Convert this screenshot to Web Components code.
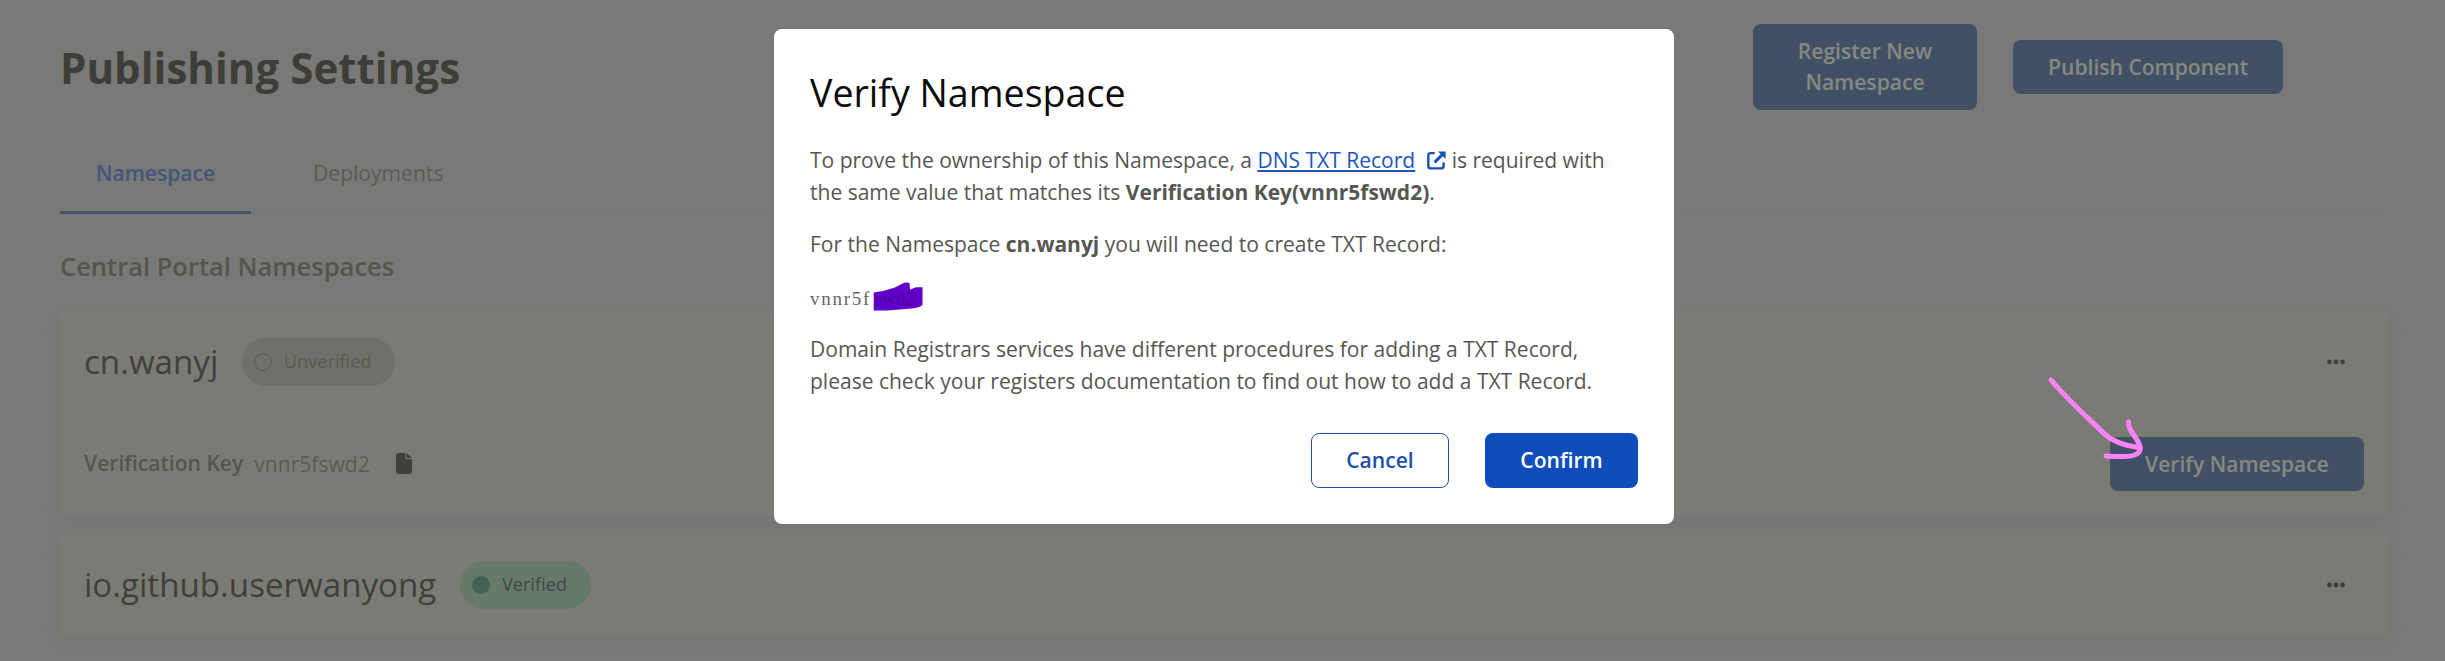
<!DOCTYPE html>
<html lang="en">
<head>
<meta charset="utf-8">
<title>Publishing Settings</title>
<style>
  html, body { margin: 0; height: 661px; overflow: hidden; background: #797977; }
  body { font-family: "Open Sans", "Noto Sans", sans-serif; font-size: 21.08px; line-height: 32px; color: #5b5b53; }
</style>
</head>
<body>
<publishing-page></publishing-page>

<script>
const define = (name, html) => customElements.define(name, class extends HTMLElement {
  constructor() {
    super();
    const t = document.createElement('template');
    t.innerHTML = html;
    this.attachShadow({ mode: 'open' }).append(t.content.cloneNode(true));
  }
});

define('ui-button', `
<style>
  :host { display: flex; align-items: center; justify-content: center; box-sizing: border-box; text-align: center;
    height: 54px; padding-bottom: 2px; border-radius: 8px; background: #425066; color: #858a80; font-weight: 600; line-height: 31px; white-space: nowrap; }
  :host([variant="primary"]) { height: 55px; background: #0f4dbd; color: #fff; }
  :host([variant="outline"]) { height: 55px; background: #fff; color: #1c50ac; border: 1px solid #1c50ac; }
</style>
<span><slot></slot></span>`);

define('status-pill', `
<style>
  :host { display: flex; align-items: center; box-sizing: border-box; height: 48px; border-radius: 24px;
    padding: 0 23.5px 0 12px; gap: 12px; background: #70706a; color: #5a5a51; font-size: 18.2px; line-height: 24px; }
  i { width: 18px; height: 18px; box-sizing: border-box; border-radius: 50%; border: 1.3px solid #5a5a51; }
  span { position: relative; top: -1px; }
  :host([verified]) { background: #66796b; color: #3e4a40; }
  :host([verified]) i { background: #426351; border: 0; }
</style>
<i></i><span><slot></slot></span>`);

define('more-icon', `
<style>:host { display: block; width: 20px; height: 8px; } svg { display: block; }</style>
<svg width="20" height="8" viewBox="0 0 20 8" fill="#3f3f39"><circle cx="3.5" cy="4" r="2.4"/><circle cx="10" cy="4" r="2.4"/><circle cx="16.5" cy="4" r="2.4"/></svg>`);

define('external-icon', `
<style>:host { display: inline-block; width: 19px; height: 19px; vertical-align: -2px; margin: 0 5.5px 0 12px; } svg { display: block; }</style>
<svg width="19" height="19" viewBox="0 0 19 19" fill="none" stroke="#134fb5" stroke-width="2.4">
  <path d="M7.6 2.1H3.6Q1.3 2.1 1.3 4.4V15.1Q1.3 17.4 3.6 17.4H14.3Q16.6 17.4 16.6 15.1V11.6"/>
  <path d="M7.6 11.4L15 4" stroke-width="3"/><path d="M11 .4H18.6V8Z" fill="#134fb5" stroke="none"/>
</svg>`);

define('file-icon', `
<style>:host { display: block; width: 16px; height: 21px; } svg { display: block; }</style>
<svg width="16" height="21" viewBox="0 0 16 21" fill="#40403a"><path d="M2.5 0H9.4V6.2H16V18.6Q16 21 13.5 21H2.5Q0 21 0 18.6V2.4Q0 0 2.5 0Z"/><path d="M10.6 0L16 5.1H10.6Z"/></svg>`);

define('page-header', `
<style>
  :host { display: flex; align-items: center; height: 86px; padding: 24px 162px 0 60px; }
  h1 { margin: 2px 0 0; flex: 1; font-size: 42.1px; line-height: 58px; font-weight: 700; color: #3e3e39; }
  .register { width: 224px; height: 86px; margin-right: 36px; }
  .publish { width: 270px; }
</style>
<h1>Publishing Settings</h1>
<ui-button class="register">Register New<br>Namespace</ui-button>
<ui-button class="publish">Publish Component</ui-button>`);

define('page-tabs', `
<style>
  :host { display: flex; gap: 26px; margin: 21px 57px 0 60px; height: 83px; box-shadow: inset 0 -1px #757573; }
  div { box-sizing: border-box; padding: 26px 36px 0; border-bottom: 3px solid transparent; color: #5b5b53; }
  .on { width: 191px; font-weight: 600; color: #42557c; border-color: #43536c; }
</style>
<div class="on">Namespace</div><div>Deployments</div>`);

define('namespace-card', `
<style>
  :host { display: flex; flex-direction: column; justify-content: space-between; box-sizing: border-box; height: 204px;
    padding: 27px 24px 24px; border-radius: 6px; background: #7b7b75; box-shadow: 0 6px 18px rgba(90,90,90,.14); }
  :host([compact]) { height: 101px; padding-top: 26px; }
  .top { display: flex; align-items: center; height: 48px; gap: 23.5px; padding-right: 18px; }
  .name { font-size: 33.15px; line-height: 44px; color: #40403a; margin-top: -1px; }
  more-icon { margin-left: auto; }
</style>
<div class="top"><div class="name"><slot name="name"></slot></div><slot name="status"></slot><more-icon></more-icon></div>
<slot></slot>`);

define('key-row', `
<style>
  :host { display: flex; align-items: center; height: 54px; }
  b { font-weight: 600; margin-right: 11px; color: #55554e; margin-top: -2px; }
  file-icon { margin: -1px auto 0 26px; }
  ui-button { width: 254px; }
</style>
<b>Verification Key</b><span><slot></slot></span><file-icon></file-icon><ui-button>Verify Namespace</ui-button>`);

define('redacted-code', `
<style>
  :host { display: block; position: relative; height: 33px; font: 19px/38px "Liberation Serif", serif; letter-spacing: 1.72px; color: #666660; }
  svg { position: absolute; left: 63px; top: 2px; }
  b { font-weight: 400; letter-spacing: 0; position: absolute; left: 65px; color: #5000a0; }
</style>
vnnr5f<svg width="50" height="30" viewBox="0 0 50 30"><path fill="#6100cb" d="M.7 10.5L10 9L22 5.5L31 .8Q36 .2 36.5 1L37 7.6L43 5.3L49.5 5.2V23Q46 26.2 36 26.8L14 28.4H.7Z"/></svg><b>swd2</b>`);

define('verify-dialog', `
<style>
  :host { display: block; box-sizing: border-box; width: 900px; height: 495px; padding: 36px; border-radius: 8px; background: #fff; color: #575752; }
  h2 { margin: 0 0 23px; padding-top: 1px; height: 54.5px; font-size: 37.6px; line-height: 54.5px; font-weight: 400; color: #0c0c0c; }
  p { margin: 0 0 20px; white-space: nowrap; font-size: 21.03px; }
  a { color: #1c55bd; text-decoration: underline; text-decoration-thickness: 2px; text-underline-offset: 2px; }
  redacted-code { margin-bottom: 20px; }
  footer { display: flex; justify-content: flex-end; gap: 36px; margin-top: 36px; }
  .cancel { width: 138px; } .confirm { width: 153px; }
</style>
<h2>Verify Namespace</h2>
<p>To prove the ownership of this Namespace, a <a>DNS TXT Record</a><external-icon></external-icon>is required with<br>the same value that matches its <b>Verification Key(vnnr5fswd2)</b>.</p>
<p>For the Namespace <b>cn.wanyj</b> you will need to create TXT Record:</p>
<redacted-code></redacted-code>
<p>Domain Registrars services have different procedures for adding a TXT Record,<br>please check your registers documentation to find out how to add a TXT Record.</p>
<footer><ui-button class="cancel" variant="outline">Cancel</ui-button><ui-button class="confirm" variant="primary">Confirm</ui-button></footer>`);

define('hand-arrow', `
<style>:host { display: block; width: 110px; height: 90px; } svg { display: block; }</style>
<svg width="110" height="90" viewBox="0 0 110 90" fill="none" stroke="#ff83f8" stroke-width="5" stroke-linecap="round" stroke-linejoin="round">
  <path d="M6 5C22 24 42 42 59 58.500C67 66 78 70.500 94 72.500"/>
  <path d="M83.500 47C82 55 95 65 95.300 73C95 80 87 81.500 79 81.500Q70 81.500 61 81"/>
</svg>`);

define('publishing-page', `
<style>
  :host { display: block; position: relative; height: 661px; overflow: hidden; }
  h3 { margin: 34px 0 27px 60px; font-size: 25.5px; line-height: 36px; font-weight: 600; color: #55554b; }
  main { display: flex; flex-direction: column; gap: 20px; margin: 0 57px 0 60px; }
  verify-dialog { position: absolute; left: 774px; top: 29px; }
  hand-arrow { position: absolute; left: 2045px; top: 375px; }
</style>
<page-header></page-header>
<page-tabs></page-tabs>
<h3>Central Portal Namespaces</h3>
<main>
  <namespace-card><span slot="name">cn.wanyj</span><status-pill slot="status">Unverified</status-pill><key-row>vnnr5fswd2</key-row></namespace-card>
  <namespace-card compact><span slot="name">io.github.userwanyong</span><status-pill slot="status" verified>Verified</status-pill></namespace-card>
</main>
<verify-dialog></verify-dialog>
<hand-arrow></hand-arrow>`);
</script>
</body>
</html>
